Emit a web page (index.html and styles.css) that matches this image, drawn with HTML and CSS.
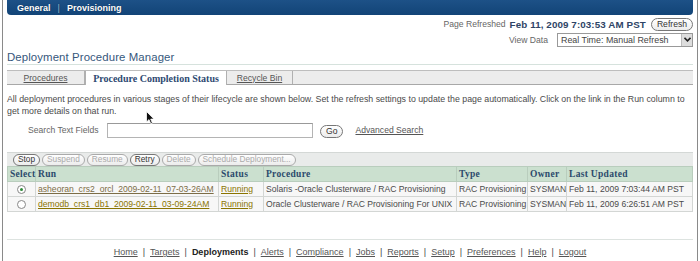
FILE: index.html
```html
<!DOCTYPE html>
<html>
<head>
<meta charset="utf-8">
<link rel="stylesheet" href="styles.css">
</head>
<body>
<div class="frame">
  <div class="page">
    <div class="topbar"><span class="tl">General</span><span class="tsep">|</span><span class="tl">Provisioning</span></div>
    <div class="refresh-row"><span class="muted">Page Refreshed</span><b class="stamp">Feb 11, 2009 7:03:53 AM PST</b><span class="pill on">Refresh</span></div>
    <div class="view-row"><span class="muted">View Data</span><span class="select"><span class="sel-text">Real Time: Manual Refresh</span><span class="sel-arrow"><svg width="7" height="5" viewBox="0 0 7 5"><path d="M0.5 0.8 L3.5 3.8 L6.5 0.8" fill="none" stroke="#222" stroke-width="1.6"/></svg></span></span></div>
    <h1 class="title">Deployment Procedure Manager</h1>
    <div class="tabs">
      <a class="tab">Procedures</a>
      <span class="tab active">Procedure Completion Status</span>
      <a class="tab">Recycle Bin</a>
    </div>
    <p class="desc">All deployment procedures in various stages of their lifecycle are shown below. Set the refresh settings to update the page automatically. Click on the link in the Run column to get more details on that run.</p>
    <div class="search-row">
      <span class="muted lbl">Search Text Fields</span>
      <span class="input"></span>
      <span class="pill on go">Go</span>
      <a class="adv">Advanced Search</a>
    </div>
    <div class="actions">
      <span class="pill on">Stop</span><span class="pill">Suspend</span><span class="pill">Resume</span><span class="pill on">Retry</span><span class="pill">Delete</span><span class="pill">Schedule Deployment...</span>
    </div>
    <table class="grid">
      <thead>
        <tr><th class="c-sel">Select</th><th class="c-run">Run</th><th class="c-st">Status</th><th class="c-proc">Procedure</th><th class="c-type">Type</th><th class="c-own">Owner</th><th class="c-upd">Last Updated</th></tr>
      </thead>
      <tbody>
        <tr><td class="c-sel"><span class="radio checked"></span></td><td><a class="run visited">asheoran_crs2_orcl_2009-02-11_07-03-26AM</a></td><td><a class="run">Running</a></td><td>Solaris -Oracle Clusterware / RAC Provisioning</td><td>RAC Provisioning</td><td>SYSMAN</td><td>Feb 11, 2009 7:03:44 AM PST</td></tr>
        <tr><td class="c-sel"><span class="radio"></span></td><td><a class="run">demodb_crs1_db1_2009-02-11_03-09-24AM</a></td><td><a class="run">Running</a></td><td>Oracle Clusterware / RAC Provisioning For UNIX</td><td>RAC Provisioning</td><td>SYSMAN</td><td>Feb 11, 2009 6:26:51 AM PST</td></tr>
      </tbody>
    </table>
    <div class="footer">
      <a>Home</a><i>|</i><a>Targets</a><i>|</i><b>Deployments</b><i>|</i><a>Alerts</a><i>|</i><a>Compliance</a><i>|</i><a>Jobs</a><i>|</i><a>Reports</a><i>|</i><a>Setup</a><i>|</i><a>Preferences</a><i>|</i><a>Help</a><i>|</i><a>Logout</a>
    </div>
  </div>
  <svg class="cursor" width="9" height="14" viewBox="0 0 9 14"><path d="M0.5 0.5 L0.5 11 L3 8.6 L4.8 12.8 L6.4 12.1 L4.7 8.1 L8 8.1 Z" fill="#111" stroke="#fff" stroke-width="0.8"/></svg>
</div>
</body>
</html>
```
FILE: styles.css
```css
* { box-sizing: border-box; }
html, body { margin: 0; padding: 0; background: #fff; }
body { font-family: "Liberation Sans", Arial, sans-serif; font-size: 8.6px; color: #444; }
.frame {
  position: relative;
  margin-left: 2px;
  width: 696px;
  height: 261px;
  border-left: 1px solid #8a8a8a;
  border-right: 1px solid #8a8a8a;
  overflow: hidden;
}
.page { padding: 0 4px 0 4px; }
.topbar {
  height: 15px;
  background: linear-gradient(#1d5187, #124477);
  border-radius: 0 0 4px 4px;
  color: #fff;
  font-size: 9px;
  font-weight: bold;
  display: flex;
  align-items: center;
  padding-left: 10px;
  text-shadow: 0 0 1px #0a2a4a;
}
.tsep { margin: 0 7px; font-weight: normal; color: #9fb6cf; }
.muted { color: #666; }
.refresh-row {
  display: flex;
  justify-content: flex-end;
  align-items: center;
  height: 14px;
  margin-top: 2px;
}
.stamp { color: #2e4466; margin-left: 4px; font-size: 9.8px; letter-spacing: 0.1px; }
.pill {
  display: inline-flex;
  align-items: center;
  height: 13px;
  padding: 0 5px;
  border: 1px solid #aaa;
  border-radius: 7px;
  background: linear-gradient(#fff, #ececec);
  color: #aaa;
  font-size: 8.6px;
  line-height: 1;
}
.pill.on { color: #333; border-color: #777; }
.refresh-row .pill { margin-left: 5px; }
.view-row {
  display: flex;
  justify-content: flex-end;
  align-items: center;
  height: 15px;
  margin-top: 1px;
}
.select {
  margin-left: 9px;
  width: 136px;
  height: 14px;
  border: 1px solid #999;
  display: flex;
  align-items: center;
  justify-content: space-between;
  padding-left: 3px;
  color: #444;
  font-size: 8.9px;
}
.sel-arrow {
  width: 11px;
  height: 12px;
  background: #ddd;
  border-left: 1px solid #bbb;
  display: flex;
  align-items: center;
  justify-content: center;
}
.title {
  margin: 4px 0 0;
  font-size: 11.4px;
  font-weight: normal;
  color: #36577c;
  padding-bottom: 1px;
  border-bottom: 1px solid #d6e2dd;
  line-height: 12px;
  letter-spacing: 0.1px;
}
.tabs {
  margin-top: 5px;
  height: 15px;
  display: flex;
  background: #ececec;
  border-top: 1px solid #bdbdbd;
  border-bottom: 1px solid #a8a8a8;
}
.tab {
  display: flex;
  align-items: center;
  justify-content: center;
  color: #555;
  text-decoration: underline;
  border-right: 1px solid #b0b0b0;
}
.tab:first-child { width: 78px; }
.tab.active {
  width: 142px;
  background: #fff;
  color: #2e4a72;
  text-decoration: none;
  font-family: "Liberation Serif", "Times New Roman", serif;
  font-weight: bold;
  font-size: 10px;
  margin-bottom: -1px;
  border-left: 1px solid #b0b0b0;
}
.tab:last-child { width: 66px; }
.desc {
  margin: 8px 0 0;
  line-height: 12px;
  color: #4a4a4a;
  font-size: 8.8px;
}
.search-row {
  display: flex;
  align-items: center;
  margin-top: 5px;
  height: 16px;
}
.lbl { margin-left: 21px; width: 79px; }
.input {
  width: 206px;
  height: 15px;
  border: 1px solid #b4b4b4;
  border-top-color: #999;
}
.go { margin-left: 7px; margin-top: 3px; }
.adv { margin-left: 12px; color: #555; text-decoration: underline; }
.actions {
  margin-top: 14px;
  height: 14px;
  background: #e9ebea;
  border-top: 1px solid #d4d8d6;
  display: flex;
  align-items: center;
  padding-left: 6px;
  gap: 2px;
}
.actions .pill { height: 12px; padding: 0 4px; font-size: 8.3px; }
.grid {
  width: 100%;
  border-collapse: collapse;
  table-layout: fixed;
}
.grid th {
  background: #cbe0cf;
  color: #2c4a6c;
  font-family: "Liberation Serif", "Times New Roman", serif;
  font-weight: bold;
  font-size: 9.5px;
  text-align: left;
  height: 15px;
  padding: 0 2px;
  border: 1px solid #b9cdbd;
  letter-spacing: 0.3px;
}
.grid td {
  height: 15px;
  padding: 0 2px;
  border: 1px solid #d3d6d4;
  background: #f7f7f7;
  white-space: nowrap;
  overflow: hidden;
  color: #4a4a4a;
  font-size: 8.6px;
}
.c-sel { width: 28px; }
.c-run { width: 183px; }
.c-st { width: 45px; }
.c-proc { width: 193px; }
.c-type { width: 71px; }
.c-own { width: 39px; }
.grid td.c-sel { text-align: center; }
.run { color: #8a7400; text-decoration: underline; }
.run.visited { color: #7c6d46; }
.radio {
  display: inline-block;
  width: 9px;
  height: 9px;
  border: 1px solid #888;
  border-radius: 50%;
  background: #fff;
  vertical-align: middle;
  position: relative;
}
.radio.checked::after {
  content: "";
  position: absolute;
  left: 2px; top: 2px;
  width: 3px; height: 3px;
  border-radius: 50%;
  background: #2f8a3a;
}
.footer {
  margin-top: 27px;
  border-top: 1px solid #dde3e0;
  padding-top: 7px;
  text-align: center;
  color: #555;
  font-size: 9px;
}
.footer a { text-decoration: underline; color: #555; }
.footer b { color: #222; }
.footer i { font-style: normal; margin: 0 5px; color: #444; }
.cursor { position: absolute; left: 143px; top: 111px; }
```
